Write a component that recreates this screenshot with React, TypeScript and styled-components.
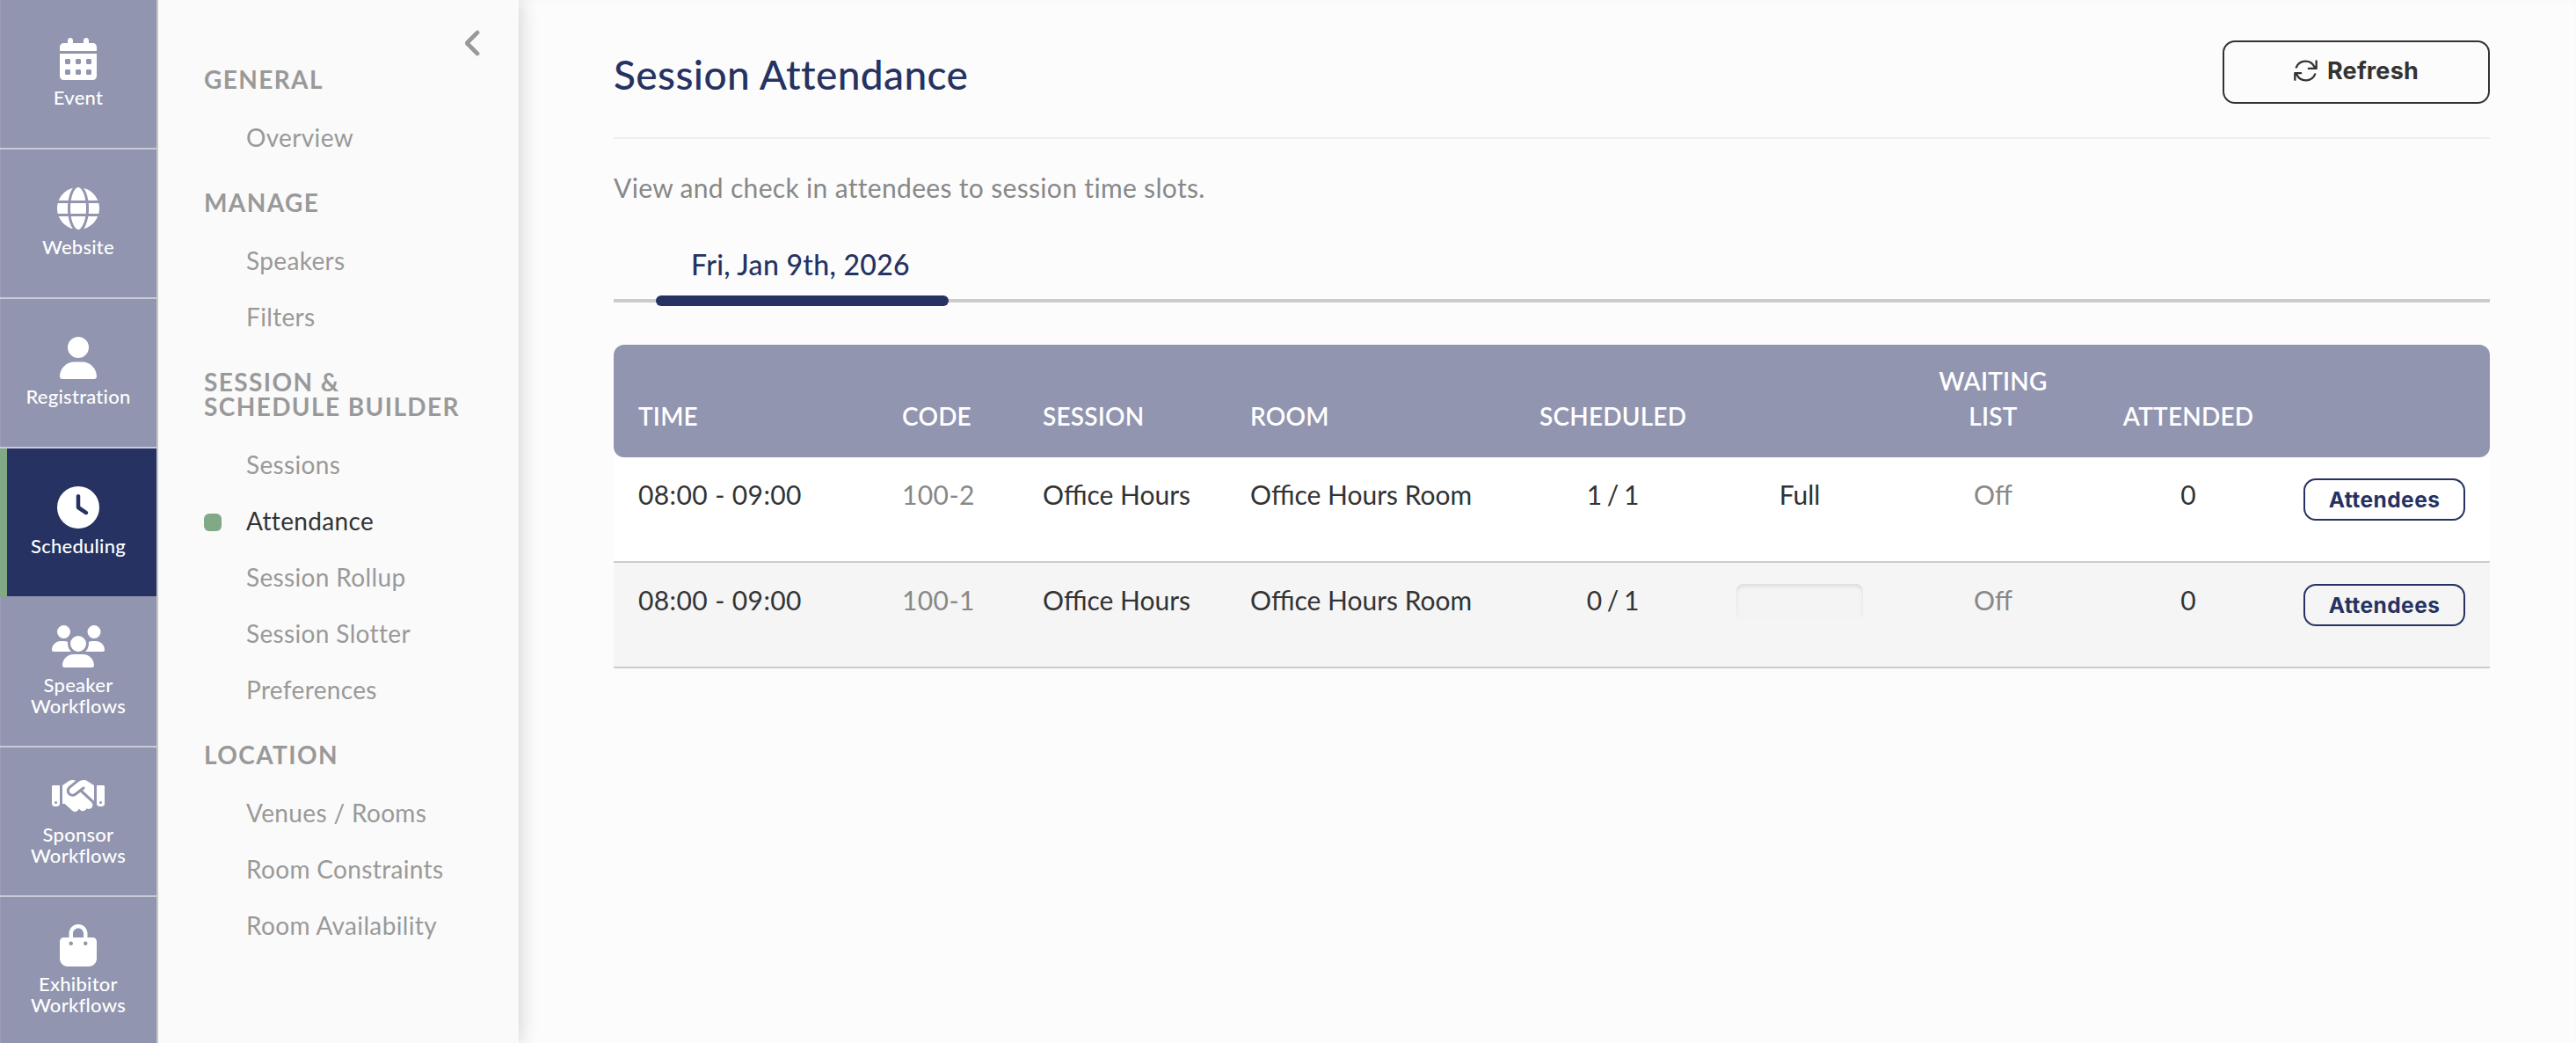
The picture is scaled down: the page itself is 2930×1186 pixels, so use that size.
import { ReactNode, useState } from "react";
import styled, { createGlobalStyle } from "styled-components";
import {
  FaBagShopping,
  FaCalendarDays,
  FaChevronLeft,
  FaClock,
  FaGlobe,
  FaHandshake,
  FaUser,
  FaUsers,
} from "react-icons/fa6";

const GlobalStyle = createGlobalStyle`
  * {
    box-sizing: border-box;
  }
  body {
    margin: 0;
    background-color: #fcfcfc;
    color: #333333;
    font-family: Lato, "Open Sans", sans-serif;
    -webkit-font-smoothing: antialiased;
  }
  button {
    font-family: Inter, "Open Sans", sans-serif;
    cursor: pointer;
  }
`;

const Window = styled.div`
  display: flex;
  width: 100%;
  height: 1186px;
  overflow: hidden;
`;

const Rail = styled.nav`
  position: relative;
  z-index: 2;
  flex: none;
  width: 180px;
  background-color: #9195af;
  border-right: 2px solid #c8c8c8;
`;

const RailItem = styled.a<{ $active?: boolean }>`
  display: flex;
  flex-direction: column;
  align-items: center;
  justify-content: center;
  gap: 8px;
  height: 170px;
  padding-bottom: 2px;
  color: #ffffff;
  font-size: 22px;
  font-weight: 500;
  line-height: 24px;
  letter-spacing: 0.25px;
  text-align: center;
  background-color: ${(p) => (p.$active ? "#263262" : "#9195af")};
  border-bottom: 2px solid ${(p) => (p.$active ? "#9195af" : "#c8cad7")};
  ${(p) =>
    p.$active
      ? "border-left: 8px solid #82a986; padding-right: 8px;"
      : "box-shadow: inset 1px 0 rgba(255, 255, 255, 0.1);"}

  svg {
    width: 60px;
    height: 48px;
  }
`;

const Sidebar = styled.aside`
  position: relative;
  z-index: 1;
  flex: none;
  width: 410px;
  padding: 33px 41px 0 52px;
  background-color: #fafafa;
  box-shadow: 0 0 22px rgba(0, 0, 0, 0.2);
`;

const Collapse = styled.div`
  display: flex;
  justify-content: flex-end;
  height: 43px;
  color: #999999;

  svg {
    width: 20px;
    height: 32px;
    stroke: currentColor;
    stroke-width: 16px;
  }
`;

const NavGroup = styled.section`
  margin-bottom: 28px;
`;

const NavHeading = styled.h2`
  margin: 0 -20px 20px 0;
  color: #999999;
  font-size: 28px;
  font-weight: 700;
  line-height: 28px;
  letter-spacing: 1.4px;
  text-transform: uppercase;
`;

const NavLink = styled.a<{ $active?: boolean }>`
  display: flex;
  align-items: center;
  height: 64px;
  color: ${(p) => (p.$active ? "#333333" : "#999999")};
  font-size: 28px;
  letter-spacing: 0.35px;
  white-space: nowrap;

  &::before {
    content: "";
    width: 20px;
    height: 20px;
    margin: 3px 28px 0 0;
    border-radius: 6px;
    background-color: ${(p) => (p.$active ? "#82a986" : "transparent")};
  }
`;

const Main = styled.main`
  flex: 1;
  padding: 0 98px 0 108px;
  background-color: #fcfcfc;
  box-shadow: inset 0 2px 4px rgba(0, 0, 0, 0.02);
`;

const PageHeader = styled.header`
  display: flex;
  align-items: flex-start;
  justify-content: space-between;
  height: 158px;
  padding-top: 46px;
  border-bottom: 2px solid #eeeeee;
`;

const Title = styled.h1`
  margin: 12px 0 0;
  color: #263262;
  font-size: 46px;
  font-weight: 500;
  line-height: 54px;
  letter-spacing: 0.4px;
`;

const RefreshButton = styled.button`
  display: flex;
  align-items: center;
  justify-content: center;
  gap: 11px;
  width: 304px;
  height: 72px;
  padding: 0 0 3px;
  color: #333333;
  font-size: 27px;
  font-weight: 700;
  letter-spacing: 0.2px;
  background-color: transparent;
  border: 2px solid #333333;
  border-radius: 14px;
`;

const Description = styled.p`
  margin: 35px 0 0;
  color: #888888;
  font-size: 30px;
  line-height: 40px;
  letter-spacing: 0.33px;
`;

const Tabs = styled.div`
  display: flex;
  height: 81px;
  margin: 30px 0 48px;
  padding-left: 48px;
  box-shadow: inset 0 -4px #cccccc;
`;

const Tab = styled.button`
  position: relative;
  width: 333px;
  height: 81px;
  padding: 0 4px 6px 0;
  color: #263262;
  font-family: Lato, sans-serif;
  font-size: 32px;
  font-weight: 500;
  letter-spacing: 0.3px;
  background: none;
  border: none;

  &::after {
    content: "";
    position: absolute;
    left: 0;
    right: 0;
    bottom: -4px;
    height: 12px;
    border-radius: 6px;
    background-color: #263262;
  }
`;

const Row = styled.div`
  display: grid;
  grid-template-columns: 300px 160px 236px 329px 223px 202px 238px 206px 240px;
`;

const HeadRow = styled(Row)`
  align-items: end;
  height: 128px;
  padding-bottom: 27px;
  color: #ffffff;
  font-size: 28px;
  font-weight: 600;
  line-height: 40px;
  letter-spacing: 0.2px;
  background-color: #9195af;
  border-radius: 12px;
`;

const BodyRow = styled(Row)`
  height: 120px;
  padding-top: 24px;
  font-size: 30px;
  line-height: 36px;
  background-color: #ffffff;
  border-bottom: 2px solid #cccccc;

  &:nth-child(odd) {
    background-color: #f5f5f5;
  }
`;

const Cell = styled.div<{ $center?: boolean; $muted?: boolean }>`
  padding: 0 28px;
  text-align: ${(p) => (p.$center ? "center" : "left")};
  color: ${(p) => (p.$muted ? "#888888" : "inherit")};
  white-space: nowrap;
`;

const TimeCell = styled(Cell)`
  letter-spacing: 0.4px;
`;

const CountCell = styled(Cell)`
  word-spacing: -2px;
`;

const SeatBar = styled.div`
  width: 144px;
  height: 40px;
  margin-left: 1px;
  border-radius: 8px;
  background-color: #f4f4f4;
  box-shadow: inset 0 3px 5px -1px rgba(0, 0, 0, 0.12);
`;

const AttendeesButton = styled.button`
  display: block;
  width: 184px;
  height: 48px;
  padding: 0;
  color: #263262;
  font-size: 24.5px;
  font-weight: 700;
  letter-spacing: 0.45px;
  background-color: transparent;
  border: 2px solid #263262;
  border-radius: 14px;
`;

const RefreshIcon = () => (
  <svg
    width="27"
    height="25"
    viewBox="0 0 80 75"
    fill="none"
    stroke="currentColor"
    strokeWidth="7"
    strokeLinecap="round"
    strokeLinejoin="round"
  >
    <path d="M8 26A34 34 0 0 1 70 24L76 29M76.500 4V29.500H50" />
    <path d="M72 49A34 34 0 0 1 10 51L4 46M3.500 68V45.500H24" />
  </svg>
);

interface IRailEntry {
  icon: ReactNode;
  lines: string[];
}

const railEntries: IRailEntry[] = [
  { icon: <FaCalendarDays />, lines: ["Event"] },
  { icon: <FaGlobe />, lines: ["Website"] },
  { icon: <FaUser />, lines: ["Registration"] },
  { icon: <FaClock />, lines: ["Scheduling"] },
  { icon: <FaUsers />, lines: ["Speaker", "Workflows"] },
  { icon: <FaHandshake />, lines: ["Sponsor", "Workflows"] },
  { icon: <FaBagShopping />, lines: ["Exhibitor", "Workflows"] },
];

const navGroups = [
  { heading: ["General"], links: ["Overview"] },
  { heading: ["Manage"], links: ["Speakers", "Filters"] },
  {
    heading: ["Session &", "Schedule Builder"],
    links: [
      "Sessions",
      "Attendance",
      "Session Rollup",
      "Session Slotter",
      "Preferences",
    ],
  },
  {
    heading: ["Location"],
    links: ["Venues / Rooms", "Room Constraints", "Room Availability"],
  },
];

const slots = [
  { code: "100-2", taken: 1, capacity: 1 },
  { code: "100-1", taken: 0, capacity: 1 },
];

function App() {
  const [section, setSection] = useState("Scheduling");
  const [page, setPage] = useState("Attendance");

  return (
    <Window>
      <GlobalStyle />
      <Rail>
        {railEntries.map(({ icon, lines }) => (
          <RailItem
            key={lines[0]}
            $active={lines[0] === section}
            onClick={() => setSection(lines[0])}
          >
            {icon}
            <div>
              {lines.map((line) => (
                <div key={line}>{line}</div>
              ))}
            </div>
          </RailItem>
        ))}
      </Rail>
      <Sidebar>
        <Collapse>
          <FaChevronLeft />
        </Collapse>
        {navGroups.map(({ heading, links }) => (
          <NavGroup key={heading[0]}>
            <NavHeading>
              {heading.map((line) => (
                <div key={line}>{line}</div>
              ))}
            </NavHeading>
            {links.map((link) => (
              <NavLink
                key={link}
                $active={link === page}
                onClick={() => setPage(link)}
              >
                {link}
              </NavLink>
            ))}
          </NavGroup>
        ))}
      </Sidebar>
      <Main>
        <PageHeader>
          <Title>Session Attendance</Title>
          <RefreshButton>
            <RefreshIcon />
            Refresh
          </RefreshButton>
        </PageHeader>
        <Description>
          View and check in attendees to session time slots.
        </Description>
        <Tabs>
          <Tab>Fri, Jan 9th, 2026</Tab>
        </Tabs>
        <div>
          <HeadRow>
            <Cell>TIME</Cell>
            <Cell>CODE</Cell>
            <Cell>SESSION</Cell>
            <Cell>ROOM</Cell>
            <Cell $center>SCHEDULED</Cell>
            <Cell />
            <Cell $center>
              WAITING
              <br />
              LIST
            </Cell>
            <Cell $center>ATTENDED</Cell>
            <Cell />
          </HeadRow>
          {slots.map(({ code, taken, capacity }) => (
            <BodyRow key={code}>
              <TimeCell>08:00 - 09:00</TimeCell>
              <TimeCell $muted>{code}</TimeCell>
              <Cell>Office Hours</Cell>
              <Cell>Office Hours Room</Cell>
              <CountCell $center>
                {taken} / {capacity}
              </CountCell>
              <Cell $center>{taken === capacity ? "Full" : <SeatBar />}</Cell>
              <Cell $center $muted>
                Off
              </Cell>
              <Cell $center>0</Cell>
              <Cell>
                <AttendeesButton>Attendees</AttendeesButton>
              </Cell>
            </BodyRow>
          ))}
        </div>
      </Main>
    </Window>
  );
}

export default App;
